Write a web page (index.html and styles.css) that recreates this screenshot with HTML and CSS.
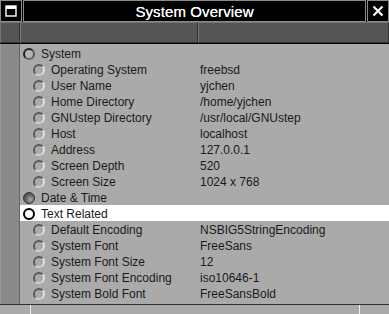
FILE: index.html
```html
<!DOCTYPE html>
<html>
<head>
<meta charset="utf-8">
<link rel="stylesheet" href="styles.css">
</head>
<body>
<div class="window">
  <div class="titlebar">
    <div class="tbtn">
      <svg width="12" height="12" viewBox="0 0 12 12"><rect x="1" y="1" width="10" height="10" fill="none" stroke="#fff" stroke-width="1.4"/><rect x="1" y="1" width="10" height="3" fill="#fff"/></svg>
    </div>
    <div class="title">System Overview</div>
    <div class="tbtn close">
      <svg width="12" height="12" viewBox="0 0 12 12"><path d="M1.5 1.5 L10.5 10.5 M10.5 1.5 L1.5 10.5" stroke="#fff" stroke-width="2.2"/></svg>
    </div>
  </div>
  <div class="header">
    <div class="hcell h0"></div>
    <div class="hcell h1"></div>
    <div class="hcell h2"></div>
  </div>
  <div class="body">
    <div class="gutter"></div>
    <div class="list">
      <div class="row l0"><span class="ic ring0"></span><span class="k">System</span></div>
      <div class="row l1"><span class="ic ring1"></span><span class="k">Operating System</span><span class="v">freebsd</span></div>
      <div class="row l1"><span class="ic ring1"></span><span class="k">User Name</span><span class="v">yjchen</span></div>
      <div class="row l1"><span class="ic ring1"></span><span class="k">Home Directory</span><span class="v">/home/yjchen</span></div>
      <div class="row l1"><span class="ic ring1"></span><span class="k">GNUstep Directory</span><span class="v">/usr/local/GNUstep</span></div>
      <div class="row l1"><span class="ic ring1"></span><span class="k">Host</span><span class="v">localhost</span></div>
      <div class="row l1"><span class="ic ring1"></span><span class="k">Address</span><span class="v">127.0.0.1</span></div>
      <div class="row l1"><span class="ic ring1"></span><span class="k">Screen Depth</span><span class="v">520</span></div>
      <div class="row l1"><span class="ic ring1"></span><span class="k">Screen Size</span><span class="v">1024 x 768</span></div>
      <div class="row l0"><span class="ic ball"></span><span class="k">Date &amp; Time</span></div>
      <div class="row l0 sel"><span class="ic ring0 dark"></span><span class="k">Text Related</span></div>
      <div class="row l1"><span class="ic ring1"></span><span class="k">Default Encoding</span><span class="v">NSBIG5StringEncoding</span></div>
      <div class="row l1"><span class="ic ring1"></span><span class="k">System Font</span><span class="v">FreeSans</span></div>
      <div class="row l1"><span class="ic ring1"></span><span class="k">System Font Size</span><span class="v">12</span></div>
      <div class="row l1"><span class="ic ring1"></span><span class="k">System Font Encoding</span><span class="v">iso10646-1</span></div>
      <div class="row l1"><span class="ic ring1"></span><span class="k">System Bold Font</span><span class="v">FreeSansBold</span></div>
    </div>
  </div>
  <div class="footer">
    <div class="f0"></div>
    <div class="f1"></div>
    <div class="f2"></div>
  </div>
</div>
</body>
</html>
```

FILE: styles.css
```css
html, body { margin: 0; padding: 0; }
body { width: 389px; height: 314px; overflow: hidden; background: #aaa; font-family: "Liberation Sans", Arial, sans-serif; }
.window { width: 389px; height: 314px; display: flex; flex-direction: column; background: #aaa; }
.titlebar { height: 22px; display: flex; background: #000; }
.tbtn { width: 20px; height: 20px; border: 1px solid #8a8a8a; display: flex; align-items: center; justify-content: center; }
.title { flex: 1; height: 20px; border: 1px solid #8a8a8a; margin: 0 1px; color: #fff; font-size: 15px; font-weight: normal; text-align: center; line-height: 21px; letter-spacing: 0.1px; text-shadow: 0 0 0.4px #fff; }
.header { height: 21px; display: flex; background: #555; border-bottom: 1px solid #000; }
.hcell { box-sizing: border-box; border-top: 1px solid #777; border-left: 1px solid #777; border-right: 1px solid #333; border-bottom: 1px solid #333; }
.h0 { width: 20px; }
.h1 { width: 178px; }
.h2 { flex: 1; }
.body { flex: 1; display: flex; min-height: 0; }
.gutter { width: 18px; background: #8a8a8a; border-left: 1px solid #9a9a9a; border-right: 1px solid #666; }
.list { flex: 1; padding-top: 1px; }
.row { height: 16px; display: flex; align-items: center; font-size: 12px; color: #1a1a1a; padding-top: 1px; box-sizing: border-box; }
.row.sel { background: #fff; }
.row .ic { width: 12px; height: 12px; box-sizing: border-box; border-radius: 50%; flex: none; }
.l0 .ic { margin-left: 3px; margin-right: 6px; }
.l1 .ic { margin-left: 13px; margin-right: 6px; }
.ring0 { border: 2px solid #222; border-right-color: #555; border-bottom-color: #666; background: #b4b4b4; }
.ring0.dark { border: 2px solid #000; background: #fff; }
.ring1 { border: 2px solid #5a5a5a; border-right-color: #e4e4e4; border-bottom-color: #d0d0d0; background: #aaa; }
.ball { background: radial-gradient(circle at 65% 65%, #aaa 0, #6a6a6a 45%, #333 100%); border: 1px solid #333; }
.k { width: 149px; white-space: nowrap; flex: none; }
.l0 .k { width: 159px; }
.v { white-space: nowrap; }
.footer { height: 9px; display: flex; border-top: 1px solid #333; background: #aaa; }
.f0 { width: 30px; border-right: 1px solid #eee; }
.f1 { width: 328px; border-right: 1px solid #eee; }
.f2 { flex: 1; }
```
